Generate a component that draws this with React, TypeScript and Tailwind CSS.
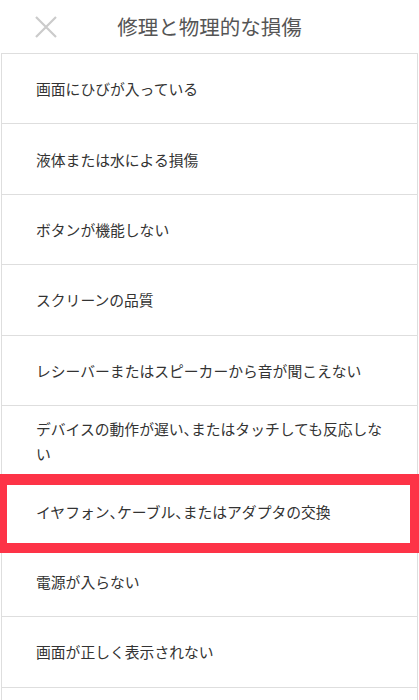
import React from "react";

const items = [
  "画面にひびが入っている",
  "液体または水による損傷",
  "ボタンが機能しない",
  "スクリーンの品質",
  "レシーバーまたはスピーカーから音が聞こえない",
  "デバイスの動作が遅い、またはタッチしても反応しない",
  "イヤフォン、ケーブル、またはアダプタの交換",
  "電源が入らない",
  "画面が正しく表示されない",
];

function Label({ text }: { text: string }) {
  const parts = text.split("、");
  return (
    <>
      {parts.map((p, i) => (
        <React.Fragment key={i}>
          {p}
          {i < parts.length - 1 && <span className="[font-feature-settings:'halt']">、</span>}
        </React.Fragment>
      ))}
    </>
  );
}

export default function App() {
  return (
    <div
      className="relative w-[419px] h-[700px] overflow-hidden bg-white"
      style={{ fontFamily: '"Noto Sans CJK JP", "Noto Sans", sans-serif' }}
    >
      <div className="relative h-[53px] flex items-center justify-center">
        <svg
          className="absolute left-[35px] top-[16px]"
          width="22"
          height="22"
          viewBox="0 0 22 22"
        >
          <path d="M1 1 L21 21 M21 1 L1 21" stroke="#cbcbcb" strokeWidth="2.2" fill="none" />
        </svg>
        <div className="text-[20.5px] leading-none text-[#555555]">修理と物理的な損傷</div>
      </div>
      <div className="mx-px border-x border-[#dedede]">
        {items.map((t, i) => (
          <div
            key={i}
            className="h-[70.4px] box-border border-t border-[#dedede] flex items-center pl-[34px] pr-[28px]"
          >
            <div className="text-[14.8px] leading-[25px] text-[#333333]">
              <Label text={t} />
            </div>
          </div>
        ))}
        <div className="h-[20px] border-t border-[#dedede]" />
      </div>
      <div className="absolute left-0 w-[419px] top-[474px] h-[79px] border-t-[11px] border-b-[10px] border-l-[7px] border-r-[9px] border-[#fd3347]" />
    </div>
  );
}
